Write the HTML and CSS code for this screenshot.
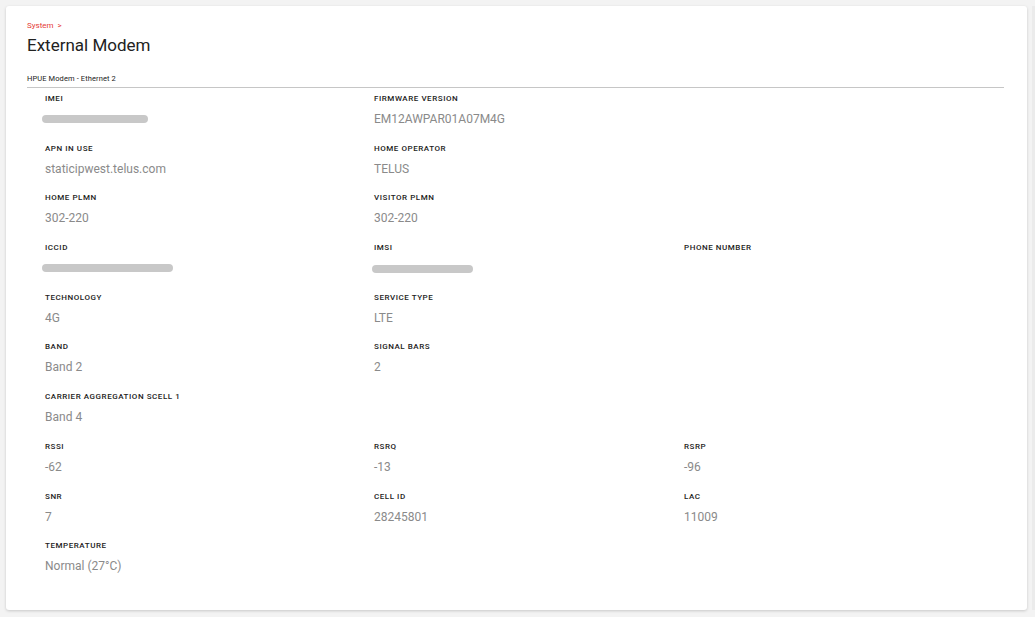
FILE: index.html
```html
<!DOCTYPE html>
<html lang="en">
<head>
    <meta charset="UTF-8">
    <meta name="viewport" content="width=device-width, initial-scale=1.0">
    <title>External Modem</title>
    <link rel="stylesheet" href="styles.css">
</head>
<body>
    <div id="page">
        <div class="card">
            <div class="crumbs">System <span class="chev">&gt;</span></div>
            <h1>External Modem</h1>
            <div class="section-title">HPUE Modem - Ethernet 2</div>
            <div class="fields">
                <div class="field"><div class="label">IMEI</div><div class="redacted" style="width:106px"></div></div>
                <div class="field"><div class="label">Firmware Version</div><div class="value">EM12AWPAR01A07M4G</div></div>
                <div class="field"></div>

                <div class="field"><div class="label">APN in use</div><div class="value">staticipwest.telus.com</div></div>
                <div class="field"><div class="label">Home Operator</div><div class="value">TELUS</div></div>
                <div class="field"></div>

                <div class="field"><div class="label">Home PLMN</div><div class="value">302-220</div></div>
                <div class="field"><div class="label">Visitor PLMN</div><div class="value">302-220</div></div>
                <div class="field"></div>

                <div class="field"><div class="label">ICCID</div><div class="redacted" style="width:131px"></div></div>
                <div class="field"><div class="label">IMSI</div><div class="redacted shift" style="width:101px"></div></div>
                <div class="field"><div class="label">Phone Number</div></div>

                <div class="field"><div class="label">Technology</div><div class="value">4G</div></div>
                <div class="field"><div class="label">Service Type</div><div class="value">LTE</div></div>
                <div class="field"></div>

                <div class="field"><div class="label">Band</div><div class="value">Band 2</div></div>
                <div class="field"><div class="label">Signal Bars</div><div class="value">2</div></div>
                <div class="field"></div>

                <div class="field"><div class="label">Carrier Aggregation SCell 1</div><div class="value">Band 4</div></div>
                <div class="field"></div>
                <div class="field"></div>

                <div class="field"><div class="label">RSSI</div><div class="value">-62</div></div>
                <div class="field"><div class="label">RSRQ</div><div class="value">-13</div></div>
                <div class="field"><div class="label">RSRP</div><div class="value">-96</div></div>

                <div class="field"><div class="label">SNR</div><div class="value">7</div></div>
                <div class="field"><div class="label">Cell ID</div><div class="value">28245801</div></div>
                <div class="field"><div class="label">LAC</div><div class="value">11009</div></div>

                <div class="field"><div class="label">Temperature</div><div class="value">Normal (27°C)</div></div>
            </div>
        </div>
        <div class="edge"></div>
    </div>
</body>
</html>
```

FILE: styles.css
```css
body {
    margin: 0;
    padding: 0;
    background: #f3f3f3;
    font-family: Roboto, "Liberation Sans", sans-serif;
    color: #222;
}
#page {
    display: flex;
    padding: 6px 0 7px 6px;
    height: 604px;
}
.card {
    width: 1021px;
    box-sizing: border-box;
    background: #fff;
    border-radius: 3px;
    box-shadow: 0 1px 3px rgba(0, 0, 0, 0.18);
    padding: 15px 23px 0 21px;
}
.edge {
    width: 8px;
    border-right: 3px solid #ebebeb;
    box-sizing: border-box;
}
.crumbs {
    font-size: 8px;
    line-height: 10px;
    color: #e53935;
}
.chev {
    margin-left: 2px;
}
h1 {
    margin: 4px 0 0;
    font-size: 17px;
    line-height: 20px;
    font-weight: 400;
    color: #222;
}
.section-title {
    margin-top: 19px;
    font-size: 7.5px;
    line-height: 10px;
    letter-spacing: 0.1px;
    padding-bottom: 3px;
    border-bottom: 1px solid #c6c6c6;
    color: #222;
}
.fields {
    display: grid;
    grid-template-columns: 329px 310px 1fr;
    grid-auto-rows: 49.7px;
    padding: 5px 0 0 18px;
}
.label {
    font-size: 8px;
    line-height: 12px;
    font-weight: 500;
    letter-spacing: 0.55px;
    text-transform: uppercase;
    color: #222;
}
.value {
    margin-top: 7px;
    font-size: 12px;
    line-height: 14px;
    color: #8a8a8a;
}
.redacted {
    margin: 10px 0 0 -3px;
    height: 8px;
    border-radius: 4px;
    background: #c8c8c8;
}
.redacted.shift {
    margin-left: -2px;
    margin-top: 11px;
}
```
